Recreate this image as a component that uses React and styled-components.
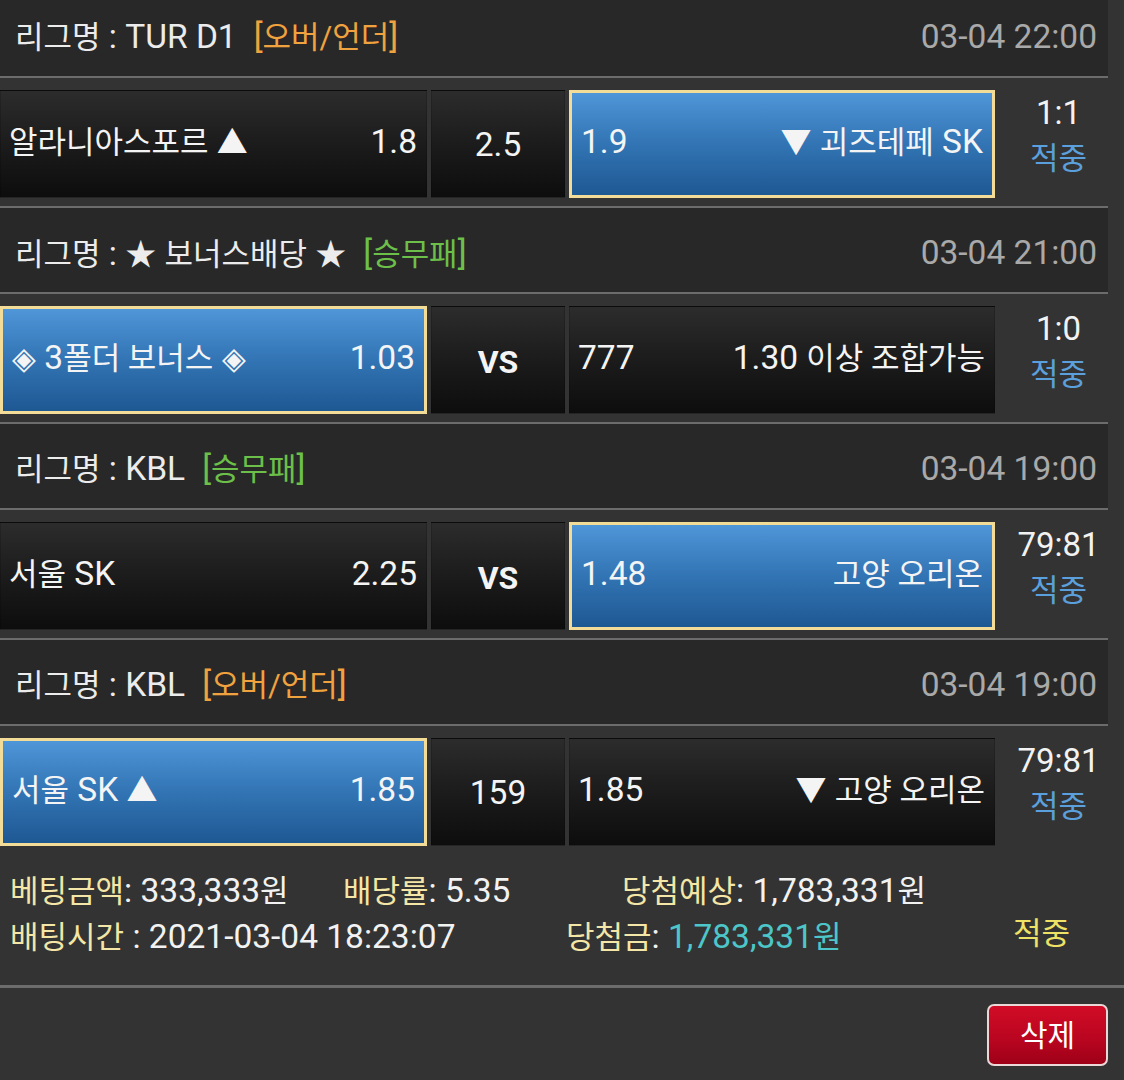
import React from 'react';
import styled, { createGlobalStyle } from 'styled-components';

const GlobalStyle = createGlobalStyle`
  html, body { margin: 0; padding: 0; background: #333333; }
  body {
    font-family: Roboto, "Liberation Sans", "Noto Sans CJK KR", sans-serif;
    color: #f2f2f2;
  }
  * { box-sizing: border-box; }
`;

const Page = styled.div`
  width: 1124px;
  height: 1080px;
  overflow: hidden;
  background: #333333;
`;

const GroupList = styled.div`
  width: 1108px;
  margin-top: -8px;
`;

const Group = styled.section`
  &:not(:last-child) {
    border-bottom: 2px solid #6c6c6c;
  }
`;

const LeagueHeader = styled.div`
  height: 86px;
  padding: 6px 11px 0 15px;
  display: flex;
  align-items: center;
  justify-content: space-between;
  background: #282828;
  border-bottom: 2px solid #6c6c6c;
  font-size: 33.5px;
  line-height: 1;
`;

const LeagueTitle = styled.div`
  color: #ececec;
  white-space: pre;
`;

const Tag = styled.span`
  margin-left: 17px;
  color: ${(p) => p.$color};
`;

const Ko = styled.span`
  font-size: 0.925em;
`;

const Sym = styled.span`
  font-family: "Noto Sans CJK KR", sans-serif;
  font-size: 0.925em;
`;

const DateText = styled.div`
  color: #a9a9a9;
`;

const GameRow = styled.div`
  height: 128px;
  padding: 12px 0 10px;
  display: grid;
  grid-template-columns: 427px 134px 426px 1fr;
  column-gap: 4px;
  background: #333333;
`;

const Cell = styled.div`
  display: flex;
  align-items: center;
  justify-content: ${(p) => (p.$center ? 'center' : 'space-between')};
  padding: 0 ${(p) => (p.$selected ? '9px' : '9px')} 5px;
  border: ${(p) => (p.$selected ? '3px solid #f2dc98' : '1px solid rgba(0,0,0,0.15)')};
  background: ${(p) =>
    p.$selected
      ? 'linear-gradient(180deg, #4f96d8 0%, #3274b4 50%, #1e5893 100%)'
      : 'linear-gradient(180deg, #2c2c2c 0%, #1a1a1a 55%, #0d0d0d 100%)'};
  font-size: 33.5px;
  line-height: 1;
  color: #f4f4f4;
  white-space: pre;
  ${(p) => (!p.$selected && !p.$center ? 'padding-left: 8px; padding-right: 9px;' : '')}
`;

const VS = styled.span`
  font-weight: 700;
  font-size: 32px;
  padding-top: 8px;
`;

const DrawValue = styled.span`
  padding-top: 6px;
`;

const ScoreCol = styled.div`
  display: flex;
  flex-direction: column;
  align-items: center;
  justify-content: center;
  padding: 0 0 16px 10px;
  font-size: 33px;
`;

const Score = styled.div`
  line-height: 46px;
  color: #f2f2f2;
`;

const Result = styled.div`
  line-height: 46px;
  font-size: 31px;
  color: ${(p) => p.$color || '#5ba0dc'};
`;

const InfoSection = styled.div`
  width: 1124px;
  height: 131px;
  padding: 12px 10px 0;
  font-size: 33.5px;
`;

const InfoLine = styled.div`
  height: 45px;
  display: grid;
  grid-template-columns: ${(p) => p.$cols};
  align-items: center;
  white-space: pre;
`;

const Label = styled.span`
  color: #f3e6a6;
  font-size: 31px;
`;

const Value = styled.span`
  color: ${(p) => p.$color || '#f4f4f4'};
`;

const BottomDivider = styled.div`
  width: 1124px;
  height: 3px;
  background: #6c6c6c;
`;

const Footer = styled.div`
  display: flex;
  justify-content: flex-end;
  padding: 16px 16px 0;
`;

const DeleteButton = styled.button`
  width: 121px;
  height: 62px;
  border: 2px solid #ead7d7;
  border-radius: 7px;
  background: linear-gradient(180deg, #d20c26 0%, #b80520 60%, #9e0018 100%);
  color: #ffffff;
  font-family: inherit;
  font-size: 30px;
  padding: 0 0 4px;
`;

const games = [
  {
    league: 'TUR D1',
    tag: '오버/언더',
    tagColor: '#f0a23e',
    date: '03-04 22:00',
    home: { name: <><Ko>알라니아스포르</Ko> <Sym>▲</Sym></>, odds: '1.8' },
    draw: { text: '2.5' },
    away: { name: <><Sym>▼</Sym> <Ko>괴즈테페</Ko> SK</>, odds: '1.9' },
    pick: 'away',
    score: '1:1',
  },
  {
    league: null,
    tag: '승무패',
    tagColor: '#6cc04a',
    date: '03-04 21:00',
    home: { name: <><Sym>◈</Sym> 3<Ko>폴더 보너스</Ko> <Sym>◈</Sym></>, odds: '1.03' },
    draw: { vs: true },
    away: { name: <>1.30 <Ko>이상 조합가능</Ko></>, odds: '777' },
    pick: 'home',
    score: '1:0',
  },
  {
    league: 'KBL',
    tag: '승무패',
    tagColor: '#6cc04a',
    date: '03-04 19:00',
    home: { name: <><Ko>서울</Ko> SK</>, odds: '2.25' },
    draw: { vs: true },
    away: { name: <Ko>고양 오리온</Ko>, odds: '1.48' },
    pick: 'away',
    score: '79:81',
  },
  {
    league: 'KBL',
    tag: '오버/언더',
    tagColor: '#f0a23e',
    date: '03-04 19:00',
    home: { name: <><Ko>서울</Ko> SK <Sym>▲</Sym></>, odds: '1.85' },
    draw: { text: '159' },
    away: { name: <><Sym>▼</Sym> <Ko>고양 오리온</Ko></>, odds: '1.85' },
    pick: 'home',
    score: '79:81',
  },
];

export default function App() {
  return (
    <Page>
      <GlobalStyle />
      <GroupList>
        {games.map((g, i) => (
          <Group key={i}>
            <LeagueHeader>
              <LeagueTitle>
                <Ko>리그명</Ko> : {g.league ? g.league : <><Sym>★</Sym> <Ko>보너스배당</Ko> <Sym>★</Sym></>}
                <Tag $color={g.tagColor}>
                  [<Ko>{g.tag}</Ko>]
                </Tag>
              </LeagueTitle>
              <DateText>{g.date}</DateText>
            </LeagueHeader>
            <GameRow>
              <Cell $selected={g.pick === 'home'}>
                <span>{g.home.name}</span>
                <span>{g.home.odds}</span>
              </Cell>
              <Cell $center>
                {g.draw.vs ? <VS>VS</VS> : <DrawValue>{g.draw.text}</DrawValue>}
              </Cell>
              <Cell $selected={g.pick === 'away'}>
                <span>{g.away.odds}</span>
                <span>{g.away.name}</span>
              </Cell>
              <ScoreCol>
                <Score>{g.score}</Score>
                <Result>적중</Result>
              </ScoreCol>
            </GameRow>
          </Group>
        ))}
      </GroupList>
      <InfoSection>
        <InfoLine $cols="333px 279px 1fr">
          <span>
            <Label>베팅금액</Label>: 333,333<Ko>원</Ko>
          </span>
          <span>
            <Label>배당률</Label>: 5.35
          </span>
          <span>
            <Label>당첨예상</Label>: 1,783,331<Ko>원</Ko>
          </span>
        </InfoLine>
        <InfoLine $cols="556px 447px 1fr">
          <span>
            <Label>배팅시간</Label> : 2021-03-04 18:23:07
          </span>
          <span>
            <Label>당첨금</Label>:{' '}
            <Value $color="#4cc6c8">
              1,783,331<Ko>원</Ko>
            </Value>
          </span>
          <Result $color="#eee266">적중</Result>
        </InfoLine>
      </InfoSection>
      <BottomDivider />
      <Footer>
        <DeleteButton>삭제</DeleteButton>
      </Footer>
    </Page>
  );
}
